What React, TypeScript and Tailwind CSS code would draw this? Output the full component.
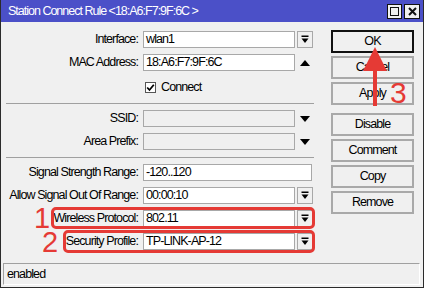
import React from "react";

const FONT = { fontFamily: '"Liberation Sans", Arial, sans-serif' };

function DropIcon() {
  return (
    <svg width="8" height="9" viewBox="0 0 8 9">
      <rect x="0.5" y="0.5" width="7" height="1.5" fill="#000" />
      <polygon points="0.5,3.5 7.5,3.5 4,8" fill="#000" />
    </svg>
  );
}

function DownTri() {
  return (
    <svg width="10" height="6" viewBox="0 0 10 6">
      <polygon points="0,0 10,0 5,6" fill="#000" />
    </svg>
  );
}

function UpTri() {
  return (
    <svg width="10" height="6" viewBox="0 0 10 6">
      <polygon points="0,6 10,6 5,0" fill="#000" />
    </svg>
  );
}

function Label({ children }: { children: React.ReactNode }) {
  return <div className="w-[137px] shrink-0 text-right leading-none whitespace-nowrap">{children}</div>;
}

function Input({ value, disabled, full }: { value?: string; disabled?: boolean; full?: boolean }) {
  return (
    <div
      className={`h-[17px] ${full ? "w-[169px]" : "w-[152px]"} border border-[#a8a8a8] ${
        disabled ? "bg-[#f0f0f0]" : "bg-white"
      } flex items-center pl-[2px] leading-none whitespace-nowrap`}
    >
      {value}
    </div>
  );
}

function DropBtn() {
  return (
    <div className="ml-[2px] w-[16px] h-[17px] border border-[#a8a8a8] bg-[#f0f0f0] flex items-center justify-center">
      <DropIcon />
    </div>
  );
}

function TriBox({ up }: { up?: boolean }) {
  return <div className="ml-[2px] w-[16px] h-[17px] flex items-center justify-center">{up ? <UpTri /> : <DownTri />}</div>;
}

function Row({ children }: { children: React.ReactNode }) {
  return <div className="flex items-center h-[17px]">{children}</div>;
}

function Btn({ children, def, className = "" }: { children: React.ReactNode; def?: boolean; className?: string }) {
  return (
    <div
      className={`w-[83px] h-[23px] flex items-center justify-center bg-[#f0f0f0] border-2 ${
        def ? "border-[#111]" : "border-[#a9a9a9]"
      } leading-none ${className}`}
    >
      {children}
    </div>
  );
}

export default function App() {
  return (
    <div
      className="relative w-[424px] h-[288px] flex flex-col bg-[#f0f0f0] border-l border-r border-b border-[#2b2b2b] text-[12.5px] tracking-[-0.9px] text-black overflow-hidden"
      style={FONT}
    >
      {/* Title bar */}
      <div className="h-[22px] shrink-0 bg-[#4b50c8] flex items-center justify-between pl-[7px] pr-[3px]">
        <div className="text-white text-[12.5px] tracking-[-1px] leading-none whitespace-nowrap">
          Station Connect Rule &lt;18:A6:F7:9F:6C &gt;
        </div>
        <div className="flex gap-[2px]">
          <div className="w-[15px] h-[15px] bg-[#f0f0f0] border border-[#111] flex items-center justify-center">
            <div className="w-[9px] h-[9px] border border-[#111]" />
          </div>
          <div className="w-[16px] h-[15px] bg-[#f0f0f0] border border-[#111] flex items-center justify-center">
            <svg width="9" height="9" viewBox="0 0 9 9">
              <path d="M1 1 L8 8 M8 1 L1 8" stroke="#111" strokeWidth="2" />
            </svg>
          </div>
        </div>
      </div>

      {/* Body */}
      <div className="flex-1 flex">
        <div className="w-[313px] pt-[9px] flex flex-col">
          <div className="flex flex-col gap-[6px]">
            <Row>
              <Label>Interface:</Label>
              <div className="ml-[5px] flex items-center">
                <Input value="wlan1" />
                <DropBtn />
              </div>
            </Row>
            <Row>
              <Label>MAC Address:</Label>
              <div className="ml-[5px] flex items-center">
                <Input value="18:A6:F7:9F:6C" />
                <TriBox up />
              </div>
            </Row>
            <Row>
              <div className="ml-[144px] mt-[3px] flex items-center gap-[5px]">
                <div className="w-[11px] h-[11px] bg-white border border-[#555] flex items-center justify-center">
                  <svg width="9" height="9" viewBox="0 0 9 9">
                    <path d="M1.2 4.5 L3.5 7 L7.8 1.8" stroke="#000" strokeWidth="1.8" fill="none" />
                  </svg>
                </div>
                <span className="leading-none">Connect</span>
              </div>
            </Row>
          </div>
          <div className="ml-[5px] mt-[9px] h-[1px] bg-[#a0a0a0]" />
          <div className="flex flex-col gap-[6px] mt-[6px]">
            <Row>
              <Label>SSID:</Label>
              <div className="ml-[5px] flex items-center">
                <Input disabled />
                <TriBox />
              </div>
            </Row>
            <Row>
              <Label>Area Prefix:</Label>
              <div className="ml-[5px] flex items-center">
                <Input disabled />
                <TriBox />
              </div>
            </Row>
          </div>
          <div className="ml-[5px] mt-[7px] h-[1px] bg-[#a0a0a0]" />
          <div className="flex flex-col gap-[6px] mt-[6px]">
            <Row>
              <Label>Signal Strength Range:</Label>
              <div className="ml-[5px] flex items-center">
                <Input value="-120..120" full />
              </div>
            </Row>
            <Row>
              <Label>Allow Signal Out Of Range:</Label>
              <div className="ml-[5px] flex items-center">
                <Input value="00:00:10" />
                <DropBtn />
              </div>
            </Row>
            <Row>
              <Label>Wireless Protocol:</Label>
              <div className="ml-[5px] flex items-center">
                <Input value="802.11" />
                <DropBtn />
              </div>
            </Row>
            <Row>
              <Label>Security Profile:</Label>
              <div className="ml-[5px] flex items-center">
                <Input value="TP-LINK-AP-12" />
                <DropBtn />
              </div>
            </Row>
          </div>
        </div>

        <div className="ml-[17px] pt-[8px] flex flex-col">
          <div className="flex flex-col gap-[3px]">
            <Btn def>OK</Btn>
            <Btn>Cancel</Btn>
            <Btn>Apply</Btn>
          </div>
          <div className="flex flex-col gap-[3px] mt-[8px]">
            <Btn>Disable</Btn>
            <Btn>Comment</Btn>
            <Btn>Copy</Btn>
            <Btn>Remove</Btn>
          </div>
        </div>
      </div>

      {/* Status bar */}
      <div className="h-[22px] shrink-0 ml-[2px] mr-[3px] mb-[2px] border-t border-l border-[#a0a0a0] border-b border-r border-b-white border-r-white flex items-center pl-[3px] leading-none">
        enabled
      </div>

      {/* Annotations */}
      <div className="absolute left-[50px] top-[207px] w-[264px] h-[22px] border-[3px] border-[#e53a35] rounded-[5px]" />
      <div className="absolute left-[62px] top-[230px] w-[252px] h-[23px] border-[3px] border-[#e53a35] rounded-[5px]" />
      <div className="absolute left-[33px] top-[204px] text-[29px] tracking-normal leading-none text-[#e53a35]">1</div>
      <div className="absolute left-[41px] top-[228px] text-[29px] tracking-normal leading-none text-[#e53a35]">2</div>
      <div className="absolute left-[389px] top-[78px] text-[30px] tracking-normal leading-none text-[#e53a35]">3</div>
      <svg className="absolute left-[360px] top-[46px]" width="28" height="62" viewBox="0 0 28 62">
        <polygon points="14,1 26,25 2,25" fill="#e53a35" />
        <rect x="12" y="24" width="4" height="36" fill="#e53a35" />
      </svg>
    </div>
  );
}
